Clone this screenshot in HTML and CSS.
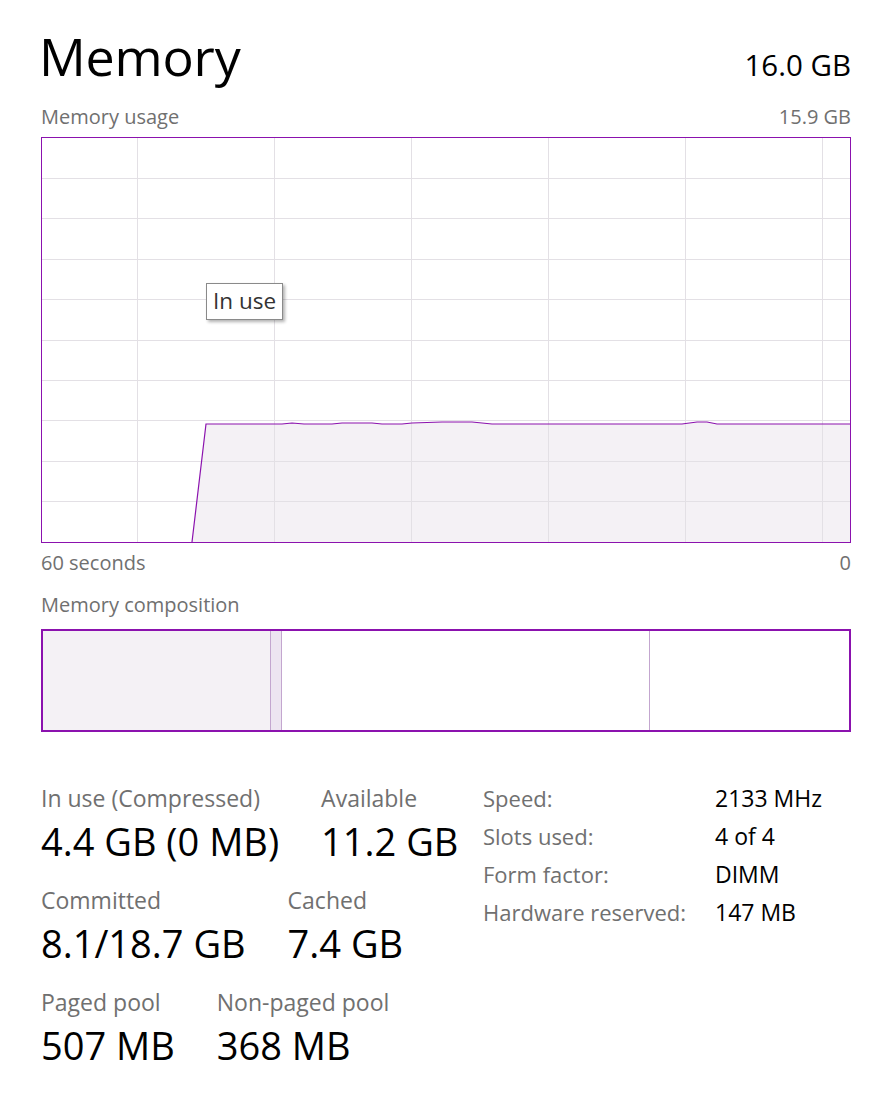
FILE: index.html
```html
<!DOCTYPE html>
<html lang="en">
<head>
<meta charset="utf-8">
<title>Memory</title>
<link rel="stylesheet" href="styles.css">
</head>
<body>
<main class="page">
  <header class="head">
    <h1 class="title">Memory</h1>
    <div class="total">16.0 GB</div>
  </header>
  <div class="caption-row usage-caption"><span>Memory usage</span><span>15.9 GB</span></div>
  <div class="graph">
    <svg class="chart" width="808" height="404" viewBox="0 0 808 404">
      <polygon class="area" points="150,404 164,286 240,286 250,285 262,286 290,286 300,285 330,285 340,286 360,286 370,285 400,284 430,284 450,286 640,286 655,284 665,284 675,286 740,286 760,286 808,286 808,404"/>
      <g class="grid">
        <line x1="0" y1="40.5" x2="808" y2="40.5"/>
        <line x1="0" y1="80.5" x2="808" y2="80.5"/>
        <line x1="0" y1="121.5" x2="808" y2="121.5"/>
        <line x1="0" y1="161.5" x2="808" y2="161.5"/>
        <line x1="0" y1="202.5" x2="808" y2="202.5"/>
        <line x1="0" y1="242.5" x2="808" y2="242.5"/>
        <line x1="0" y1="282.5" x2="808" y2="282.5"/>
        <line x1="0" y1="323.5" x2="808" y2="323.5"/>
        <line x1="0" y1="363.5" x2="808" y2="363.5"/>
        <line x1="95.5" y1="0" x2="95.5" y2="404"/>
        <line x1="232.5" y1="0" x2="232.5" y2="404"/>
        <line x1="369.5" y1="0" x2="369.5" y2="404"/>
        <line x1="506.5" y1="0" x2="506.5" y2="404"/>
        <line x1="643.5" y1="0" x2="643.5" y2="404"/>
        <line x1="780.5" y1="0" x2="780.5" y2="404"/>
      </g>
      <polyline class="line" points="150,404 164,286 240,286 250,285 262,286 290,286 300,285 330,285 340,286 360,286 370,285 400,284 430,284 450,286 640,286 655,284 665,284 675,286 740,286 760,286 808,286"/>
    </svg>
    <div class="tip">In use</div>
  </div>
  <div class="caption-row axis"><span>60 seconds</span><span>0</span></div>
  <div class="caption-row comp-title"><span>Memory composition</span></div>
  <div class="comp">
    <div class="seg seg-inuse"></div>
    <div class="sep"></div>
    <div class="seg seg-mod"></div>
    <div class="sep"></div>
    <div class="seg seg-standby"></div>
    <div class="sep"></div>
    <div class="seg seg-free"></div>
  </div>
  <section class="stats">
    <div class="stat-col">
      <div class="stat-row">
        <div class="stat"><div class="label">In use (Compressed)</div><div class="value">4.4 GB (0 MB)</div></div>
        <div class="stat"><div class="label">Available</div><div class="value">11.2 GB</div></div>
      </div>
      <div class="stat-row">
        <div class="stat"><div class="label">Committed</div><div class="value">8.1/18.7 GB</div></div>
        <div class="stat"><div class="label">Cached</div><div class="value">7.4 GB</div></div>
      </div>
      <div class="stat-row">
        <div class="stat"><div class="label">Paged pool</div><div class="value">507 MB</div></div>
        <div class="stat"><div class="label">Non-paged pool</div><div class="value">368 MB</div></div>
      </div>
    </div>
    <dl class="specs">
      <dt>Speed:</dt><dd>2133 MHz</dd>
      <dt>Slots used:</dt><dd>4 of 4</dd>
      <dt>Form factor:</dt><dd>DIMM</dd>
      <dt>Hardware reserved:</dt><dd>147 MB</dd>
    </dl>
  </section>
</main>
</body>
</html>
```
FILE: styles.css
```css
html, body {
  margin: 0;
  background: #ffffff;
}
body {
  font-family: "Open Sans", "Noto Sans", sans-serif;
  color: #000000;
}
.page {
  padding: 24px 25px 0 41px;
}
.head {
  display: flex;
  justify-content: space-between;
  align-items: baseline;
  height: 64px;
}
.title {
  margin: 0 0 0 -2px;
  font-size: 52px;
  font-weight: 400;
  line-height: 64px;
  letter-spacing: -0.2px;
}
.total {
  font-size: 29.5px;
  line-height: 36px;
}
.caption-row {
  display: flex;
  justify-content: space-between;
  font-size: 20px;
  line-height: 24px;
  color: #707070;
}
.usage-caption {
  margin-top: 17px;
}
.graph {
  position: relative;
  margin-top: 8px;
  height: 404px;
  border: 1px solid #8b12ae;
}
.chart {
  display: block;
}
.area {
  fill: #f4f1f5;
}
.grid line {
  stroke: #e3e0e5;
  stroke-width: 1;
}
.line {
  fill: none;
  stroke: #8b12ae;
  stroke-width: 1.2;
}
.tip {
  position: absolute;
  left: 164px;
  top: 145px;
  padding: 0 6px;
  height: 35px;
  line-height: 34px;
  font-size: 22.5px;
  color: #333333;
  background: #ffffff;
  border: 1px solid #8a8a8a;
  box-shadow: 2px 2px 3px rgba(0, 0, 0, 0.3);
}
.axis {
  margin-top: 8px;
}
.comp-title {
  margin-top: 18px;
}
.comp {
  margin-top: 12px;
  height: 99px;
  border: 2px solid #8b12ae;
  display: flex;
}
.seg-inuse {
  width: 227px;
  background: #f4f1f5;
}
.seg-mod {
  width: 10px;
  background: #ede5f1;
}
.seg-standby {
  width: 367px;
  background: #ffffff;
}
.seg-free {
  flex: 1;
  background: #ffffff;
}
.sep {
  width: 1px;
  background: #c3a6cf;
}
.stats {
  display: flex;
  align-items: flex-start;
  margin-top: 54px;
}
.stat-col {
  width: 442px;
  display: flex;
  flex-direction: column;
  gap: 25px;
}
.stat-row {
  display: flex;
  gap: 42px;
}
.label {
  font-size: 23px;
  line-height: 24px;
  color: #707070;
}
.value {
  margin-top: 9px;
  font-size: 38px;
  line-height: 44px;
}
.specs {
  margin: 0;
  display: grid;
  grid-template-columns: 232px auto;
  row-gap: 14px;
  line-height: 24px;
}
.specs dt {
  font-size: 22px;
  color: #707070;
}
.specs dd {
  margin: 0;
  font-size: 23px;
  color: #000000;
}
```
